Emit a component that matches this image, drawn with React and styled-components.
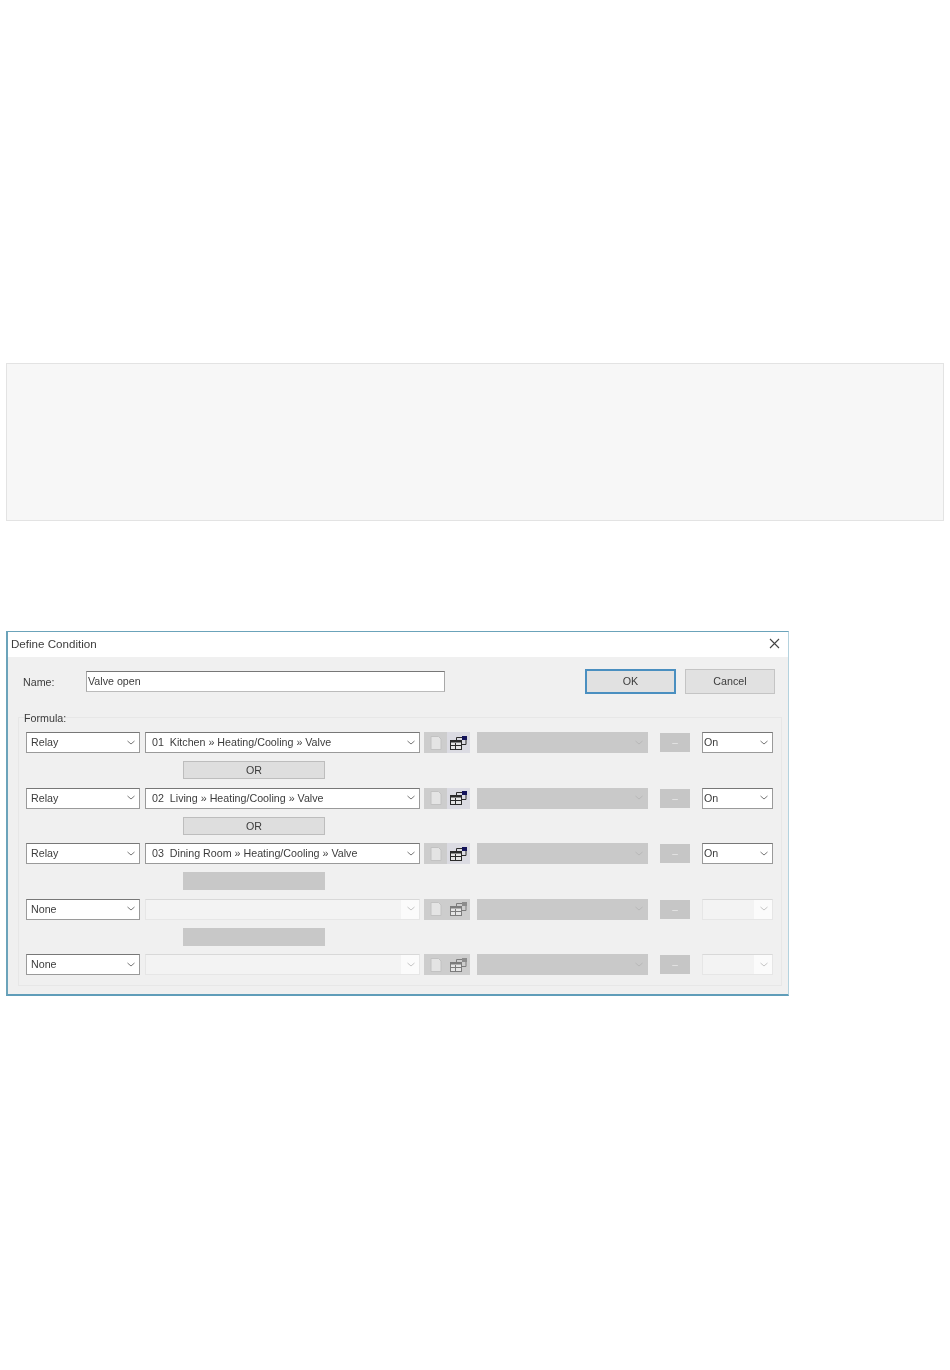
import React from 'react';
import styled, { createGlobalStyle } from 'styled-components';

const GlobalStyle = createGlobalStyle`
  html, body {
    margin: 0;
    background: #fff;
  }
  body {
    font-family: "Liberation Sans", Arial, sans-serif;
    font-size: 10.7px;
    color: #3c3c3c;
  }
`;

const Page = styled.div`
  height: 1370px;
  box-sizing: border-box;
  padding: 363px 6px 0;
`;

const Panel = styled.div`
  width: 938px;
  height: 158px;
  box-sizing: border-box;
  background: #f7f7f7;
  border: 1px solid #e3e3e3;
`;

const Dialog = styled.div`
  width: 783px;
  height: 365px;
  margin-top: 110px;
  box-sizing: border-box;
  display: flex;
  flex-direction: column;
  background: #fff;
  border: 1px solid #6ba3ba;
  border-left-width: 2px;
  border-right-color: #b4d2de;
  border-bottom: 2px solid #5f9db9;
  filter: blur(0.45px);
`;

const TitleBar = styled.div`
  height: 25px;
  flex: none;
  display: flex;
  align-items: center;
  justify-content: space-between;
  padding: 0 8px 2px 3px;
  box-sizing: border-box;
  font-size: 11.6px;
`;

const Body = styled.div`
  flex: 1;
  background: #f0f0f0;
  padding: 12px 6px 0 10px;
`;

const TopRow = styled.div`
  display: flex;
  align-items: center;
  padding: 0 7px 0 5px;
`;

const NameLabel = styled.span`
  width: 63px;
`;

const NameInput = styled.div`
  width: 359px;
  height: 21px;
  box-sizing: border-box;
  padding: 3px 1px;
  line-height: 13px;
  background: #fff;
  border: 1px solid #a8a8a8;
  border-top-color: #777;
  border-bottom-color: #bbb;
`;

const ActionButton = styled.div`
  width: ${(p) => p.$w}px;
  height: 25px;
  margin-left: ${(p) => p.$ml}px;
  box-sizing: border-box;
  display: flex;
  align-items: center;
  justify-content: center;
  padding-bottom: 2px;
  background: #e1e1e1;
  border: ${(p) => (p.$primary ? '2px solid #4a8fc0' : '1px solid #c4c4c4')};
`;

const Group = styled.div`
  margin-top: 23px;
  padding: 0 7px 10px;
  border: 1px solid #e7e7e7;
`;

const GroupLabel = styled.div`
  height: 21px;
  margin-top: -7px;
  margin-left: -2px;
  line-height: 14px;
`;

const Rows = styled.div`
  display: flex;
  flex-direction: column;
  gap: 8.25px;
`;

const Row = styled.div`
  display: flex;
  align-items: center;
  height: 21px;
`;

const fills = {
  on: '#fff',
  off: 'linear-gradient(to right, #f3f3f3 calc(100% - 18px), #fbfbfb 0)',
  gray: '#c9c9c9',
};
const edges = { on: '#9a9a9a', off: '#e6e6e6', gray: '#c9c9c9' };
const tops = { on: '#777', off: '#d8d8d8', gray: '#c9c9c9' };

const Dropdown = styled.div`
  width: ${(p) => p.$w}px;
  height: 21px;
  margin-left: ${(p) => p.$ml || 0}px;
  flex: none;
  box-sizing: border-box;
  display: flex;
  align-items: center;
  padding: 0 4px 1px ${(p) => p.$pad || 4}px;
  white-space: pre;
  background: ${(p) => fills[p.$state]};
  border: 1px solid ${(p) => edges[p.$state]};
  border-top-color: ${(p) => tops[p.$state]};

  svg {
    margin-left: auto;
  }
`;

const ToolCell = styled.div`
  width: 46px;
  height: 21px;
  margin-left: 4px;
  flex: none;
  display: flex;
  background: #cdcdcd;
`;

const ToolHalf = styled.div`
  flex: 1;
  display: flex;
  align-items: center;
  justify-content: center;
  background: ${(p) => (p.$active ? '#dbdbe2' : 'transparent')};
`;

const SmallButton = styled.div`
  width: 30px;
  height: 19px;
  margin-left: 12px;
  flex: none;
  display: flex;
  align-items: center;
  justify-content: center;
  background: #c6c6c6;
  color: #e8e8e8;
  font-size: 10px;
`;

const Connector = styled.div`
  width: 142px;
  height: 18px;
  margin-left: 157px;
  box-sizing: border-box;
  display: flex;
  align-items: center;
  justify-content: center;
  background: ${(p) => (p.$on ? '#dedede' : '#c8c8c8')};
  border: 1px solid ${(p) => (p.$on ? '#bdbdbd' : '#c8c8c8')};
`;

const Chevron = ({ color = '#777' }) => (
  <svg width="8" height="5" viewBox="0 0 8 5" fill="none" stroke={color} strokeWidth="1">
    <path d="M0.5 1 L4 4 L7.5 1" />
  </svg>
);

const CloseIcon = () => (
  <svg width="11" height="11" viewBox="0 0 11 11" stroke="#444" strokeWidth="1.1">
    <path d="M1 1 L10 10 M10 1 L1 10" />
  </svg>
);

const DocIcon = () => (
  <svg width="14" height="16" viewBox="0 0 14 16" fill="#e4e4e4" stroke="#c2c2c2" strokeWidth="1">
    <path d="M2 1.5 H9.5 L12 4 V14.5 H2 Z" />
  </svg>
);

const WindowsIcon = ({ active }) => {
  const ink = active ? '#2a2a2a' : '#7c7c7c';
  const cap = active ? '#14145a' : '#8c8c8c';
  return (
    <svg width="19" height="16" viewBox="0 0 19 16" fill="none" stroke={ink} strokeWidth="1">
      <path d="M7.5 5 V2.5 H17 V9.5 H13" />
      <rect x="13" y="1" width="5" height="4" fill={cap} stroke="none" />
      <rect x="1.5" y="5.5" width="11" height="9" fill="#e6e6e6" />
      <path d="M1.5 6.5 H12.5" strokeWidth="2" />
      <path d="M1.5 10.5 H12.5 M6.5 8 V14.5" />
    </svg>
  );
};

const rows = [
  { kind: 'Relay', target: '01  Kitchen » Heating/Cooling » Valve', value: 'On', link: 'OR' },
  { kind: 'Relay', target: '02  Living » Heating/Cooling » Valve', value: 'On', link: 'OR' },
  { kind: 'Relay', target: '03  Dining Room » Heating/Cooling » Valve', value: 'On', link: '' },
  { kind: 'None', target: '', value: '', link: '' },
  { kind: 'None', target: '', value: '' },
];

const FormulaRow = ({ kind, target, value }) => {
  const state = target ? 'on' : 'off';
  return (
    <Row>
      <Dropdown $w={114} $state="on">
        {kind}
        <Chevron />
      </Dropdown>
      <Dropdown $w={275} $ml={5} $pad={6} $state={state}>
        {target}
        <Chevron color={target ? '#777' : '#c4c4c4'} />
      </Dropdown>
      <ToolCell>
        <ToolHalf>
          <DocIcon />
        </ToolHalf>
        <ToolHalf $active={!!target}>
          <WindowsIcon active={!!target} />
        </ToolHalf>
      </ToolCell>
      <Dropdown $w={171} $ml={7} $state="gray">
        <Chevron color="#b8b8b8" />
      </Dropdown>
      <SmallButton>–</SmallButton>
      <Dropdown $w={71} $ml={12} $pad={1} $state={state}>
        {value}
        <Chevron color={value ? '#777' : '#c4c4c4'} />
      </Dropdown>
    </Row>
  );
};

const App = () => (
  <>
    <GlobalStyle />
    <Page>
      <Panel />
      <Dialog>
        <TitleBar>
          Define Condition
          <CloseIcon />
        </TitleBar>
        <Body>
          <TopRow>
            <NameLabel>Name:</NameLabel>
            <NameInput>Valve open</NameInput>
            <ActionButton $w={91} $ml={140} $primary>OK</ActionButton>
            <ActionButton $w={90} $ml={9}>Cancel</ActionButton>
          </TopRow>
          <Group>
            <GroupLabel>Formula:</GroupLabel>
            <Rows>
              {rows.map((row, i) => (
                <React.Fragment key={i}>
                  <FormulaRow {...row} />
                  {row.link !== undefined && <Connector $on={!!row.link}>{row.link}</Connector>}
                </React.Fragment>
              ))}
            </Rows>
          </Group>
        </Body>
      </Dialog>
    </Page>
  </>
);

export default App;
